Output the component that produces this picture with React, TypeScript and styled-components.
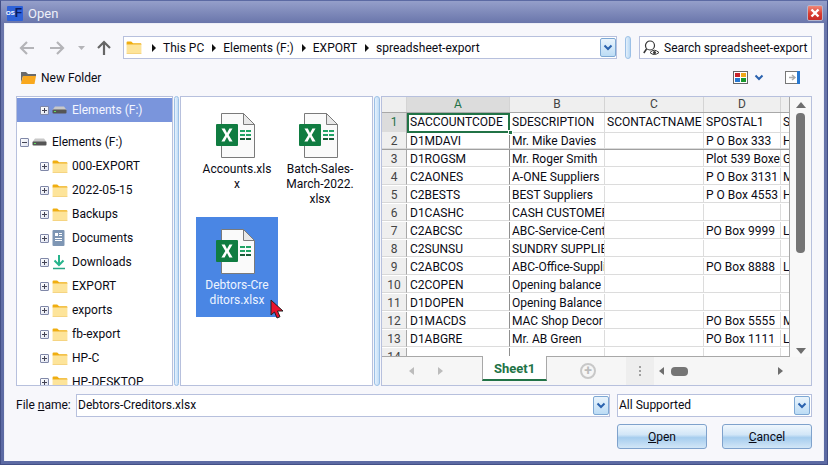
import React from 'react';
import styled, {createGlobalStyle} from 'styled-components';

const Global = createGlobalStyle`
  html, body {
    margin: 0;
    padding: 0;
    background: #5c6aa3;
  }
  * {
    box-sizing: border-box;
  }
`;

const Win = styled.div`
  width: 828px;
  height: 465px;
  display: flex;
  flex-direction: column;
  background: linear-gradient(#959fca, #6a76ab 22px, #5c6aa3);
  border: 1px solid #434f86;
  border-top-color: #5c6aa3;
  padding: 0 3px 3px;
  overflow: hidden;
  font-family: Roboto, "Noto Sans", sans-serif;
  font-size: 12px;
  color: #0a0a14;
`;

const TitleBar = styled.div`
  height: 22px;
  flex: none;
  display: flex;
  align-items: center;
  justify-content: space-between;
  padding: 2px 0 0 3px;
`;

const TitleLeft = styled.div`
  display: flex;
  align-items: center;
  gap: 5px;
  color: #eef0f8;
  font-size: 13px;
`;

const AppLogo = styled.span`
  width: 16px;
  height: 15px;
  background: #2f62d8;
  color: #0c1c60;
  font-family: "Liberation Sans", sans-serif;
  font-size: 12px;
  font-weight: 700;
  line-height: 15px;
  display: flex;
  justify-content: flex-end;
  align-items: center;
  padding-right: 1px;
  border-radius: 1px;
`;

const LogoSmall = styled.span`
  font-size: 6px;
  color: #fff;
`;

const CloseBtn = styled.button`
  width: 16px;
  height: 16px;
  padding: 0;
  margin: 0 1px 0 0;
  border: 1px solid #b4b4cc;
  border-radius: 2px;
  background: linear-gradient(#f08878, #d83c30 55%, #c82c28);
  display: flex;
  align-items: center;
  justify-content: center;
`;

const Body = styled.div`
  flex: 1;
  min-height: 0;
  background: #f7f7fb;
  padding: 12px 11px 0 11px;
  display: flex;
  flex-direction: column;
  border: 1px solid #eceef6;
  border-bottom: 0;
`;

const NavRow = styled.div`
  height: 23px;
  flex: none;
  display: flex;
  align-items: center;
`;

const NavBtns = styled.div`
  width: 107px;
  flex: none;
  display: flex;
  align-items: center;
  padding-left: 3px;
`;

const NavGap = styled.span<{$w: number}>`
  display: inline-flex;
  width: ${p => p.$w}px;
  align-items: center;
`;

const Field = styled.div`
  height: 23px;
  background: #fff;
  border: 1px solid #b7c0dd;
  display: flex;
  align-items: center;
  overflow: hidden;
`;

const Address = styled(Field)`
  width: 494px;
  flex: none;
  padding: 0 0 0 2px;
  gap: 7px;
`;

const FolderSlot = styled.span`
  width: 18px;
  flex: none;
  display: flex;
`;

const Crumb = styled.span`
  white-space: nowrap;
`;

const Caret = styled.span`
  width: 0;
  height: 0;
  border-left: 4px solid #111;
  border-top: 4px solid transparent;
  border-bottom: 4px solid transparent;
  margin-left: 1px;
`;

const Grow = styled.span`
  flex: 1;
`;

const DropBtn = styled.span`
  width: 16px;
  height: 19px;
  flex: none;
  border: 1px solid #7ea8d4;
  border-radius: 2px;
  background: linear-gradient(#eaf4fc, #bcdcf5);
  display: flex;
  align-items: center;
  justify-content: center;
`;

const Pill = styled.span`
  width: 6px;
  height: 23px;
  flex: none;
  margin: 0 8px;
  border: 1px solid #9cc0e6;
  border-radius: 3px;
  background: linear-gradient(90deg, #e4f0fb, #b8d8f4);
`;

const Search = styled(Field)`
  width: 173px;
  flex: none;
  padding-left: 3px;
  gap: 3px;
  white-space: nowrap;
`;

const Tools = styled.div`
  height: 37px;
  flex: none;
  display: flex;
  align-items: center;
  justify-content: space-between;
  padding: 0 0 0 5px;
`;

const NewFolder = styled.div`
  display: flex;
  align-items: center;
  gap: 5px;
`;

const ViewTools = styled.div`
  display: flex;
  align-items: center;
  gap: 6px;
  padding-right: 12px;
`;

const PanelToggle = styled.svg`
  margin-left: 15px;
`;

const Panes = styled.div`
  height: 290px;
  flex: none;
  display: grid;
  grid-template-columns: 157px 7px 193px 8px 431px;
`;

const Pane = styled.div`
  border: 1px solid #b7c0dd;
  background: #fff;
  overflow: hidden;
  min-width: 0;
  position: relative;
`;

const TreePane = styled(Pane)`
  padding-top: 1px;
`;

const Splitter = styled.div`
  margin: 0 1px;
  border: 1px solid #9cc0e6;
  border-radius: 3px;
  background: linear-gradient(90deg, #e8f2fc, #c0dcf6);
`;

const TreeRow = styled.div<{$sel?: boolean; $indent: number; $mb?: number}>`
  height: 24px;
  display: flex;
  align-items: center;
  padding-left: ${p => p.$indent}px;
  white-space: nowrap;
  margin-bottom: ${p => p.$mb || 0}px;
  background: ${p => (p.$sel ? '#7a95dc' : 'transparent')};
  color: ${p => (p.$sel ? '#f4f6ff' : 'inherit')};
`;

const Expander = styled.span`
  width: 9px;
  height: 9px;
  flex: none;
  border: 1px solid #8088a8;
  border-radius: 1px;
  background: linear-gradient(135deg, #fff, #dfe3f0);
  position: relative;
  margin-right: 3px;
`;

const ExpH = styled.span`
  position: absolute;
  left: 1px;
  right: 1px;
  top: 3px;
  height: 1px;
  background: #445;
`;

const ExpV = styled.span`
  position: absolute;
  top: 1px;
  bottom: 1px;
  left: 3px;
  width: 1px;
  background: #445;
`;

const TreeIcon = styled.span`
  width: 20px;
  height: 16px;
  flex: none;
  display: flex;
  align-items: center;
`;

const FilesGrid = styled.div`
  display: grid;
  grid-template-columns: 82px 82px;
  grid-auto-rows: 100px;
  column-gap: 1px;
  row-gap: 16px;
  padding: 4px 0 0 15px;
`;

const FileCard = styled.div<{$sel?: boolean}>`
  display: flex;
  flex-direction: column;
  align-items: center;
  padding-top: 12px;
  text-align: center;
  line-height: 15px;
  background: ${p => (p.$sel ? '#4a86e4' : 'transparent')};
  color: ${p => (p.$sel ? '#eef4ff' : 'inherit')};
`;

const ExcelIcon = styled.svg`
  margin-right: 3px;
  flex: none;
`;

const FileName = styled.div`
  margin-top: 4px;
  white-space: nowrap;
`;

const Pointer = styled.svg`
  position: absolute;
  left: 89px;
  top: 202px;
`;

const SheetBox = styled.div`
  height: 100%;
  display: grid;
  grid-template-columns: 1fr 21px;
  grid-template-rows: 260px 1fr;
`;

const Sheet = styled.div`
  border-right: 1px solid #a8a8a8;
  border-bottom: 1px solid #a8a8a8;
  overflow: hidden;
`;

const SheetRow = styled.div<{$freeze?: boolean; $head?: boolean; $first?: boolean}>`
  display: grid;
  grid-template-columns: 25px 103px 95px 99px 77px 9px;
  height: ${p => (p.$head ? 16 : p.$first ? 19 : 18)}px;
  background: ${p => (p.$head ? '#efefef' : '#fff')};
  border-bottom: 1px solid ${p => (p.$freeze ? '#a0a0a0' : p.$head ? '#a8a8a8' : 'transparent')};
`;

const HeadCell = styled.div<{$on?: boolean}>`
  text-align: center;
  line-height: 15px;
  color: ${p => (p.$on ? '#1f7246' : '#444')};
  background: ${p => (p.$on ? '#dcdcdc' : 'transparent')};
  border-right: 1px solid #d4d4d4;
  overflow: hidden;
`;

const RowNum = styled.div<{$on?: boolean}>`
  text-align: center;
  line-height: 19px;
  color: ${p => (p.$on ? '#1f7246' : '#444')};
  background: ${p => (p.$on ? '#dcdcdc' : '#efefef')};
  border-right: 1px solid #a8a8a8;
  border-bottom: 1px solid #d8d8d8;
  overflow: hidden;
`;

const Cell = styled.div<{$heavy?: boolean; $sel?: boolean}>`
  line-height: 19px;
  padding-left: ${p => (p.$heavy ? 3 : 2)}px;
  white-space: nowrap;
  overflow: hidden;
  border-right: 1px solid ${p => (p.$heavy ? '#909090' : '#dcdcdc')};
  border-bottom: 1px solid #dcdcdc;
  ${p => p.$sel && 'outline: 2px solid #217346; outline-offset: -2px;'}
`;

const SelectedWrap = styled.div`
  position: relative;
  min-width: 0;
  display: grid;
`;

const Handle = styled.span`
  position: absolute;
  right: -3px;
  bottom: -2px;
  width: 5px;
  height: 5px;
  background: #217346;
  border: 1px solid #fff;
`;

const VScroll = styled.div`
  grid-row: 1;
  grid-column: 2;
  display: flex;
  flex-direction: column;
  align-items: center;
  background: #f8f8f8;
  padding-top: 5px;
`;

const ArrowUp = styled.span`
  width: 0;
  height: 0;
  border-left: 5px solid transparent;
  border-right: 5px solid transparent;
  border-bottom: 6px solid #6e6e6e;
`;

const ArrowDown = styled.span`
  width: 0;
  height: 0;
  border-left: 5px solid transparent;
  border-right: 5px solid transparent;
  border-top: 6px solid #6e6e6e;
  margin-top: auto;
  margin-bottom: 3px;
`;

const VThumb = styled.div`
  width: 9px;
  height: 140px;
  margin-top: 5px;
  border-radius: 4px;
  background: #757575;
`;

const TabBar = styled.div`
  grid-row: 2;
  grid-column: 1 / span 2;
  background: #f6f6f6;
  display: flex;
  align-items: stretch;
`;

const TabNav = styled.div`
  width: 100px;
  flex: none;
  display: flex;
  align-items: center;
  padding-left: 27px;
  gap: 24px;
`;

const Tri = styled.span<{$dir: 'left' | 'right'; $dark?: boolean}>`
  width: 0;
  height: 0;
  border-top: 4px solid transparent;
  border-bottom: 4px solid transparent;
  ${p => (p.$dir === 'left' ? 'border-right' : 'border-left')}: 5px solid ${p => (p.$dark ? '#6e6e6e' : '#bcbcbc')};
`;

const SheetTab = styled.div`
  width: 65px;
  flex: none;
  margin-top: -1px;
  background: #fff;
  border: 1px solid #a8a8a8;
  border-top: 0;
  border-bottom: 2px solid #217346;
  color: #217346;
  font-weight: 700;
  text-align: center;
  line-height: 26px;
  height: 25px;
  font-size: 13px;
`;

const AddSheet = styled.div`
  width: 79px;
  flex: none;
  display: flex;
  align-items: center;
  padding-left: 33px;
`;

const Plus = styled.span`
  width: 16px;
  height: 16px;
  border: 2px solid #c8c8c8;
  border-radius: 50%;
  color: #bcbcbc;
  font-size: 14px;
  font-weight: 700;
  line-height: 11px;
  text-align: center;
`;

const DotsBox = styled.div`
  width: 28px;
  flex: none;
  background: #eeeeee;
  display: flex;
  align-items: center;
  justify-content: center;
`;

const Dots = styled.span`
  width: 2px;
  height: 10px;
  background: repeating-linear-gradient(#a0a0a0 0 2px, transparent 2px 4px);
`;

const HBar = styled.div`
  flex: 1;
  display: flex;
  align-items: center;
  padding: 0 28px 0 5px;
`;

const HThumb = styled.span`
  width: 17px;
  height: 9px;
  border-radius: 4px;
  background: #757575;
  margin: 0 auto 0 7px;
`;

const FileRow = styled.div`
  height: 23px;
  margin-top: 8px;
  flex: none;
  display: flex;
  align-items: center;
`;

const FileLabel = styled.div`
  width: 60px;
  flex: none;
  margin-top: -2px;
`;

const FieldText = styled.span`
  margin-top: -2px;
`;

const U = styled.span`
  text-decoration: underline;
`;

const NameField = styled(Field)`
  width: 534px;
  flex: none;
  padding: 0 0 0 1px;
`;

const FilterField = styled(Field)`
  width: 195px;
  flex: none;
  margin-left: 7px;
  padding: 0 1px 0 1px;
`;

const Buttons = styled.div`
  margin-top: 7px;
  flex: none;
  display: flex;
  justify-content: flex-end;
  gap: 15px;
`;

const Btn = styled.button`
  width: 90px;
  height: 25px;
  padding: 0;
  border: 1px solid #7fa2cc;
  border-radius: 3px;
  font: inherit;
  color: inherit;
  background: linear-gradient(#f0f7fd, #d2e6f7 42%, #a6cdee 55%, #d2e6f7);
`;

const Chevron = () => (
  <svg width="10" height="7" viewBox="0 0 10 7">
    <path d="M1.500 1.500 5 5l3.500-3.500" fill="none" stroke="#2a62ae" strokeWidth="2"/>
  </svg>
);

const Arrow = ({dir, color}: {dir: 'left' | 'right' | 'up'; color: string}) => {
  const rot = dir === 'left' ? 0 : dir === 'right' ? 180 : 90;
  return (
    <svg width="16" height="16" viewBox="0 0 16 16" style={{transform: `rotate(${rot}deg)`}}>
      <path d="M15 8H2M8 2 2 8l6 6" fill="none" stroke={color} strokeWidth="2.200"/>
    </svg>
  );
};

const Folder = () => (
  <svg width="16" height="13" viewBox="0 0 17 14">
    <path d="M0.500 1.500a1 1 0 0 1 1-1h4l2 2h8a1 1 0 0 1 1 1V4H.5z" fill="#f0ae10"/>
    <path d="M.5 4h16v9a.6.6 0 0 1-.6.6H1.100A.6.6 0 0 1 .5 13z" fill="#fde49a"/>
    <path d="M.5 13h16v.6H.5z" fill="#efc35c"/>
  </svg>
);

const Drive = () => (
  <svg width="15" height="8" viewBox="0 0 15 8">
    <path d="M3 .5h9L14.500 4H.5z" fill="#c8c8c8"/>
    <rect x=".5" y="3.500" width="14" height="4" rx="1" fill="#555"/>
    <rect x="2" y="5" width="2" height="1" fill="#5ee05e"/>
  </svg>
);

const DocsIcon = () => (
  <svg width="13" height="16" viewBox="0 0 13 16">
    <rect width="12" height="16" x=".5" fill="#7e96b4" rx="1"/>
    <path d="M3 3h3v3H3zM7 3h3v1H7zM7 5h3v1H7zM3 8h7v1H3zM3 10h7v1H3z" fill="#fff"/>
  </svg>
);

const DownloadIcon = () => (
  <svg width="14" height="16" viewBox="0 0 14 16">
    <path d="M7 1v10M2.500 6.500 7 11l4.500-4.500" fill="none" stroke="#27b48c" strokeWidth="2"/>
    <path d="M1 14.500h12" stroke="#27a585" strokeWidth="1.500"/>
  </svg>
);

const Excel = () => (
  <ExcelIcon width="39" height="45" viewBox="0 0 39 45">
    <path d="M5.500.5h22l11 11v33h-33z" fill="#fafafa" stroke="#7a7a7a"/>
    <path d="M27.500.5v11h11z" fill="#e8e8e8" stroke="#7a7a7a"/>
    <rect y="11" width="22" height="22" rx="1" fill="#107c41"/>
    <path d="M5.500 15.500h3.300L11 20l2.400-4.500h3.100L12.700 22l3.900 6.500h-3.300L11 24l-2.400 4.500H5.400L9.300 22z" fill="#fff"/>
    <path d="M24 17h5v2h-5zM30 17h5v2h-5zM24 21h5v2h-5zM30 21h5v2h-5z" fill="#21a366"/>
    <path d="M24 25h5v2h-5zM30 25h5v2h-5z" fill="#185c37"/>
  </ExcelIcon>
);

type TreeItem = {name: string; icon: 'folder' | 'docs' | 'down'};

const treeItems: TreeItem[] = [
  {name: '000-EXPORT', icon: 'folder'},
  {name: '2022-05-15', icon: 'folder'},
  {name: 'Backups', icon: 'folder'},
  {name: 'Documents', icon: 'docs'},
  {name: 'Downloads', icon: 'down'},
  {name: 'EXPORT', icon: 'folder'},
  {name: 'exports', icon: 'folder'},
  {name: 'fb-export', icon: 'folder'},
  {name: 'HP-C', icon: 'folder'},
  {name: 'HP-DESKTOP', icon: 'folder'}
];

const rows: string[][] = [
  ['SACCOUNTCODE', 'SDESCRIPTION', 'SCONTACTNAME', 'SPOSTAL1', 'S'],
  ['D1MDAVI', 'Mr. Mike Davies', '', 'P O Box 333', 'H'],
  ['D1ROGSM', 'Mr. Roger Smith', '', 'Plot 539 Boxer', 'G'],
  ['C2AONES', 'A-ONE Suppliers', '', 'P O Box 3131', 'M'],
  ['C2BESTS', 'BEST Suppliers', '', 'P O Box 4553', 'H'],
  ['D1CASHC', 'CASH CUSTOMERS', '', '', ''],
  ['C2ABCSC', 'ABC-Service-Centre', '', 'PO Box 9999', 'L'],
  ['C2SUNSU', 'SUNDRY SUPPLIERS', '', '', ''],
  ['C2ABCOS', 'ABC-Office-Supplies', '', 'PO Box 8888', 'L'],
  ['C2COPEN', 'Opening balance', '', '', ''],
  ['D1DOPEN', 'Opening Balance', '', '', ''],
  ['D1MACDS', 'MAC Shop Decor', '', 'PO Box 5555', 'M'],
  ['D1ABGRE', 'Mr. AB Green', '', 'PO Box 1111', 'L'],
  ['', '', '', '', '']
];

function App() {
  return (
    <Win>
      <Global/>
      <TitleBar>
        <TitleLeft>
          <AppLogo><LogoSmall>OS</LogoSmall>F</AppLogo>
          Open
        </TitleLeft>
        <CloseBtn aria-label="Close">
          <svg width="10" height="10" viewBox="0 0 10 10">
            <path d="M1.500 1.500l7 7M8.500 1.500l-7 7" stroke="#fff" strokeWidth="2.400"/>
          </svg>
        </CloseBtn>
      </TitleBar>
      <Body>
        <NavRow>
          <NavBtns>
            <NavGap $w={30}><Arrow dir="left" color="#b4b4b8"/></NavGap>
            <NavGap $w={29}><Arrow dir="right" color="#b4b4b8"/></NavGap>
            <NavGap $w={18}>
              <svg width="7" height="4" viewBox="0 0 7 4"><path d="M0 0h7L3.500 4z" fill="#b4b4b8"/></svg>
            </NavGap>
            <Arrow dir="up" color="#666"/>
          </NavBtns>
          <Address>
            <FolderSlot><Folder/></FolderSlot>
            <Caret/>
            <Crumb>This PC</Crumb>
            <Caret/>
            <Crumb>Elements (F:)</Crumb>
            <Caret/>
            <Crumb>EXPORT</Crumb>
            <Caret/>
            <Crumb>spreadsheet-export</Crumb>
            <Grow/>
            <DropBtn><Chevron/></DropBtn>
          </Address>
          <Pill/>
          <Search>
            <svg width="18" height="16" viewBox="0 0 18 16">
              <circle cx="7" cy="5.500" r="4.500" fill="none" stroke="#333" strokeWidth="1.200"/>
              <path d="M3.500 9 .8 13" stroke="#333" strokeWidth="1.500"/>
              <path d="M7 12.500q4-4.500 9 0q-5 4-9 0z" fill="#fff" stroke="#333"/>
              <circle cx="11.500" cy="12.500" r="1.500" fill="#333"/>
            </svg>
            Search spreadsheet-export
          </Search>
        </NavRow>
        <Tools>
          <NewFolder>
            <svg width="15" height="13" viewBox="0 0 15 13">
              <path d="M0 1h5l2 2h8v2H2L0 12z" fill="#6a6a6a"/>
              <path d="M2 5h13l-1.500 8H0z" fill="#f9a81e"/>
            </svg>
            New Folder
          </NewFolder>
          <ViewTools>
            <svg width="15" height="13" viewBox="0 0 15 13">
              <rect x=".5" y=".5" width="14" height="12" fill="#fff" stroke="#666"/>
              <rect x="2" y="2" width="5" height="4" fill="#c8242c"/>
              <rect x="8" y="2" width="5" height="4" fill="#f0a818"/>
              <rect x="2" y="7" width="5" height="4" fill="#2878d0"/>
              <rect x="8" y="7" width="5" height="4" fill="#18982c"/>
            </svg>
            <Chevron/>
            <PanelToggle width="15" height="13" viewBox="0 0 15 13">
              <rect x=".5" y=".5" width="14" height="12" fill="#fff" stroke="#777"/>
              <rect x="12" y="0" width="3" height="13" fill="#2878d0"/>
              <path d="M4 6.500h5M7 4l3 2.500L7 9" fill="none" stroke="#aaa" strokeWidth="1.500"/>
            </PanelToggle>
          </ViewTools>
        </Tools>
        <Panes>
          <TreePane>
            <TreeRow $sel $indent={23} $mb={8}>
              <Expander><ExpH/><ExpV/></Expander>
              <TreeIcon><Drive/></TreeIcon>
              Elements (F:)
            </TreeRow>
            <TreeRow $indent={3}>
              <Expander><ExpH/></Expander>
              <TreeIcon><Drive/></TreeIcon>
              Elements (F:)
            </TreeRow>
            {treeItems.map(t =>
              <TreeRow key={t.name} $indent={23}>
                <Expander><ExpH/><ExpV/></Expander>
                <TreeIcon>
                  {t.icon === 'folder' ? <Folder/> : t.icon === 'docs' ? <DocsIcon/> : <DownloadIcon/>}
                </TreeIcon>
                {t.name}
              </TreeRow>
            )}
          </TreePane>
          <Splitter/>
          <Pane>
            <FilesGrid>
              <FileCard>
                <Excel/>
                <FileName>Accounts.xls<br/>x</FileName>
              </FileCard>
              <FileCard>
                <Excel/>
                <FileName>Batch-Sales-<br/>March-2022.<br/>xlsx</FileName>
              </FileCard>
              <FileCard $sel>
                <Excel/>
                <FileName>Debtors-Cre<br/>ditors.xlsx</FileName>
              </FileCard>
            </FilesGrid>
            <Pointer width="14" height="20" viewBox="0 0 14 20">
              <path d="M1 1v15l3.500-3 2.500 6 3-1.300-2.500-5.700H13z" fill="#e8112d" stroke="#222" strokeWidth="1"/>
            </Pointer>
          </Pane>
          <Splitter/>
          <Pane>
            <SheetBox>
              <Sheet>
                <SheetRow $head>
                  <HeadCell/>
                  <HeadCell $on>A</HeadCell>
                  <HeadCell>B</HeadCell>
                  <HeadCell>C</HeadCell>
                  <HeadCell>D</HeadCell>
                  <HeadCell/>
                </SheetRow>
                {rows.map((r, i) =>
                  <SheetRow key={i} $freeze={i === 1} $first={i === 0}>
                    <RowNum $on={i === 0}>{i + 1}</RowNum>
                    {r.map((c, j) =>
                      i === 0 && j === 0 ?
                        <SelectedWrap key={j}>
                          <Cell $heavy $sel>{c}</Cell>
                          <Handle/>
                        </SelectedWrap> :
                        <Cell key={j} $heavy={j === 0}>{c}</Cell>
                    )}
                  </SheetRow>
                )}
              </Sheet>
              <VScroll>
                <ArrowUp/>
                <VThumb/>
                <ArrowDown/>
              </VScroll>
              <TabBar>
                <TabNav>
                  <Tri $dir="left"/>
                  <Tri $dir="right"/>
                </TabNav>
                <SheetTab>Sheet1</SheetTab>
                <AddSheet>
                  <Plus>+</Plus>
                </AddSheet>
                <DotsBox><Dots/></DotsBox>
                <HBar>
                  <Tri $dir="left" $dark/>
                  <HThumb/>
                  <Tri $dir="right" $dark/>
                </HBar>
              </TabBar>
            </SheetBox>
          </Pane>
        </Panes>
        <FileRow>
          <FileLabel>File <U>n</U>ame:</FileLabel>
          <NameField>
            <FieldText>Debtors-Creditors.xlsx</FieldText>
            <Grow/>
            <DropBtn><Chevron/></DropBtn>
          </NameField>
          <FilterField>
            <FieldText>All Supported</FieldText>
            <Grow/>
            <DropBtn><Chevron/></DropBtn>
          </FilterField>
        </FileRow>
        <Buttons>
          <Btn><U>O</U>pen</Btn>
          <Btn><U>C</U>ancel</Btn>
        </Buttons>
      </Body>
    </Win>
  );
}

export default App;
